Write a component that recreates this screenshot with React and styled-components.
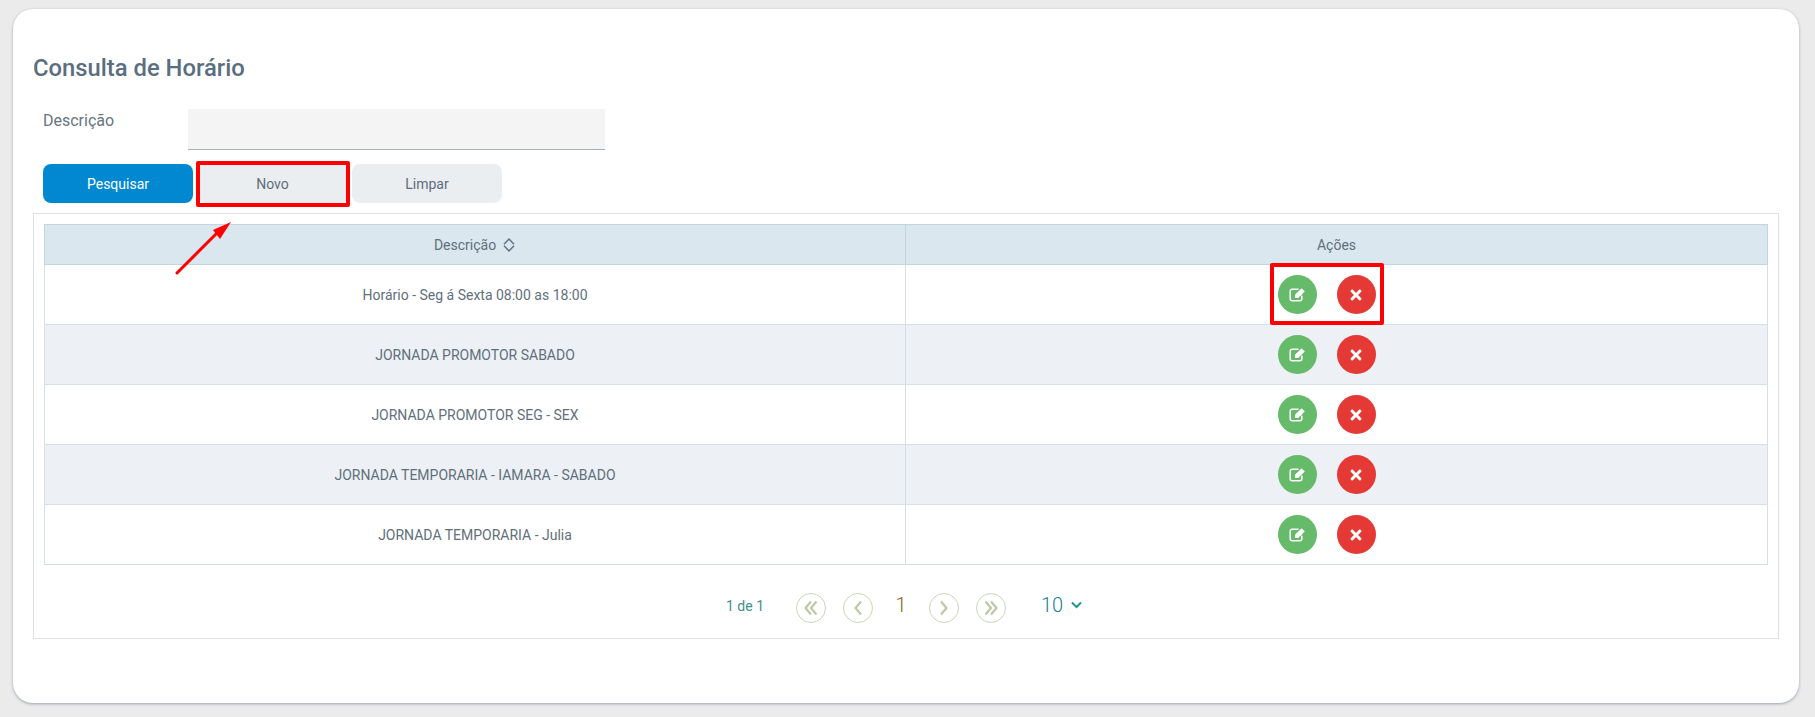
import styled, { createGlobalStyle } from "styled-components";
import { FaTimes } from "react-icons/fa";

const rows = [
  "Horário - Seg á Sexta 08:00 as 18:00",
  "JORNADA PROMOTOR SABADO",
  "JORNADA PROMOTOR SEG - SEX",
  "JORNADA TEMPORARIA - IAMARA - SABADO",
  "JORNADA TEMPORARIA - Julia",
];

const EditIcon = () => (
  <svg width="17" height="15" viewBox="0 0 17 15">
    <path
      d="M9.5 2.2 H3.2 A2 2 0 0 0 1.2 4.2 V11.8 A2 2 0 0 0 3.2 13.8 H10.8 A2 2 0 0 0 12.8 11.8 V8.6"
      fill="none"
      stroke="#fff"
      strokeWidth="1.5"
    />
    <path d="M6 7.8 L12.6 1.2 L15.8 4.4 L9.2 11 L6 11 Z" fill="#fff" />
  </svg>
);

const ActionButtons = () => (
  <Actions>
    <RoundButton $color="#66bb6a">
      <EditIcon />
    </RoundButton>
    <RoundButton $color="#e53935">
      <FaTimes size={16} />
    </RoundButton>
  </Actions>
);

const PageIcon = ({ d }) => (
  <PageButton>
    <svg width="18" height="18" viewBox="0 0 18 18" fill="none" stroke="#b9cba3" strokeWidth="2.2">
      <path d={d} />
    </svg>
  </PageButton>
);

const App = () => {
  return (
    <>
      <GlobalStyle />
      <Card>
        <Title>Consulta de Horário</Title>
        <FormRow>
          <Label>Descrição</Label>
          <Input />
        </FormRow>
        <ButtonRow>
          <Button $primary>Pesquisar</Button>
          <MarkedButton>
            <Button>Novo</Button>
            <Highlight $top={-3} $right={-2} $bottom={-4} $left={-2} />
            <Arrow width="60" height="60" viewBox="0 0 60 60">
              <path d="M3 53 L42 14" stroke="#f00" strokeWidth="3" strokeLinecap="round" />
              <path d="M57 2 L39 10 L46 19 Z" fill="#f00" />
            </Arrow>
          </MarkedButton>
          <Button>Limpar</Button>
        </ButtonRow>
        <Panel>
          <Table>
            <thead>
              <tr>
                <HeadCell $width="860px">
                  Descrição
                  <SortIcon width="14" height="16" viewBox="0 0 14 16" fill="none" stroke="#5f7283" strokeWidth="1.5">
                    <path d="M2 7.2 L7 2 L12 7.2 M2 8.8 L7 14 L12 8.8" />
                  </SortIcon>
                </HeadCell>
                <HeadCell>Ações</HeadCell>
              </tr>
            </thead>
            <tbody>
              {rows.map((it, idx) => (
                <Row key={idx} $even={idx % 2 === 1}>
                  <Cell>{it}</Cell>
                  <Cell>
                    <ActionsWrap>
                      <ActionButtons />
                      {idx === 0 && <Highlight $top={-12} $right={-8} $bottom={-11} $left={-8} />}
                    </ActionsWrap>
                  </Cell>
                </Row>
              ))}
            </tbody>
          </Table>
          <Pagination>
            <PageInfo>1 de 1</PageInfo>
            <PageButtons>
              <PageIcon d="M9 2.5 L3.5 9 L9 15.5 M14.5 2.5 L9 9 L14.5 15.5" />
              <PageIcon d="M12 2.5 L6.5 9 L12 15.5" />
              <PageNumber>1</PageNumber>
              <PageIcon d="M6 2.5 L11.5 9 L6 15.5" />
              <PageIcon d="M3.5 2.5 L9 9 L3.5 15.5 M9 2.5 L14.5 9 L9 15.5" />
            </PageButtons>
            <PageSize>
              10
              <svg width="11" height="8" viewBox="0 0 11 8" fill="none" stroke="#26948c" strokeWidth="2">
                <path d="M1 1.5 L5.5 6 L10 1.5" />
              </svg>
            </PageSize>
          </Pagination>
        </Panel>
      </Card>
    </>
  );
};

export default App;

const GlobalStyle = createGlobalStyle`
  html, body {
    margin: 0;
    height: 717px;
    overflow: hidden;
    background: #ebebeb;
    font-family: Roboto, "Liberation Sans", sans-serif;
  }
`;

const Card = styled.div`
  box-sizing: border-box;
  width: 1786px;
  height: 694px;
  margin: 9px 0 0 13px;
  padding: 43px 20px 0;
  background: #fff;
  border-radius: 20px;
  box-shadow: 0 1px 3px rgba(90, 100, 130, 0.55);
`;

const Title = styled.h1`
  margin: 0;
  font-size: 23.8px;
  line-height: 32px;
  font-weight: 500;
  color: #5a6e7f;
`;

const FormRow = styled.div`
  display: flex;
  margin-top: 25px;
  padding-left: 10px;
`;

const Label = styled.label`
  width: 145px;
  padding-top: 1px;
  font-size: 16px;
  line-height: 22px;
  color: #66757f;
`;

const Input = styled.input`
  box-sizing: border-box;
  width: 417px;
  height: 41px;
  border: none;
  border-bottom: 1px solid #a9b1b8;
  background: #f4f4f4;
`;

const ButtonRow = styled.div`
  display: flex;
  gap: 4.5px;
  margin-top: 14px;
  padding-left: 10px;
`;

const Button = styled.button`
  width: 150px;
  height: 39px;
  border: none;
  border-radius: 8px;
  font-family: inherit;
  font-size: 14px;
  color: ${(p) => (p.$primary ? "#fff" : "#5d6d7a")};
  background: ${(p) => (p.$primary ? "#0288d1" : "#ebeef1")};
`;

const MarkedButton = styled.div`
  position: relative;
  display: flex;
`;

const Highlight = styled.div`
  position: absolute;
  top: ${(p) => p.$top}px;
  right: ${(p) => p.$right}px;
  bottom: ${(p) => p.$bottom}px;
  left: ${(p) => p.$left}px;
  border: 4px solid #f00;
  border-radius: 2px;
  pointer-events: none;
`;

const Arrow = styled.svg`
  position: absolute;
  top: 56px;
  left: -23.5px;
  z-index: 2;
`;

const Panel = styled.div`
  box-sizing: border-box;
  height: 426px;
  margin-top: 10px;
  padding: 10px 10px 0;
  border: 1px solid #dfe1e3;
`;

const Table = styled.table`
  width: 100%;
  border-collapse: collapse;
  table-layout: fixed;
  color: #5f6f7c;
  font-size: 14px;
`;

const HeadCell = styled.th`
  width: ${(p) => p.$width || "auto"};
  height: 39px;
  padding: 0;
  border: 1px solid #c3d5df;
  background: #dae7ee;
  font-weight: 400;
  text-align: center;
`;

const SortIcon = styled.svg`
  margin-left: 6px;
  vertical-align: -3px;
`;

const Row = styled.tr`
  background: ${(p) => (p.$even ? "#edf1f5" : "#fff")};
`;

const Cell = styled.td`
  height: 59px;
  padding: 0;
  border: 1px solid #d5dfe6;
  text-align: center;
`;

const ActionsWrap = styled.div`
  position: relative;
  display: inline-flex;
  margin-right: 20px;
  vertical-align: middle;
`;

const Actions = styled.div`
  display: flex;
  gap: 20px;
`;

const RoundButton = styled.div`
  display: flex;
  align-items: center;
  justify-content: center;
  width: 39px;
  height: 39px;
  border-radius: 50%;
  color: #fff;
  background: ${(p) => p.$color};
`;

const Pagination = styled.div`
  display: flex;
  align-items: center;
  margin-top: 28px;
  padding-left: 682px;
`;

const PageInfo = styled.span`
  width: 70px;
  margin-bottom: 4px;
  font-size: 14px;
  color: #3f8f8c;
`;

const PageButtons = styled.div`
  display: flex;
  align-items: center;
  gap: 17px;
`;

const PageButton = styled.div`
  display: flex;
  align-items: center;
  justify-content: center;
  box-sizing: border-box;
  width: 30px;
  height: 30px;
  border: 1px solid #c9d6bb;
  border-radius: 50%;
`;

const PageNumber = styled.span`
  width: 22px;
  margin-top: -6px;
  text-align: center;
  font-size: 20px;
  font-weight: 300;
  color: #8f5f18;
`;

const PageSize = styled.div`
  display: flex;
  align-items: center;
  gap: 8px;
  margin-left: 35px;
  margin-top: -6px;
  font-size: 20px;
  font-weight: 300;
  color: #14858f;
`;
